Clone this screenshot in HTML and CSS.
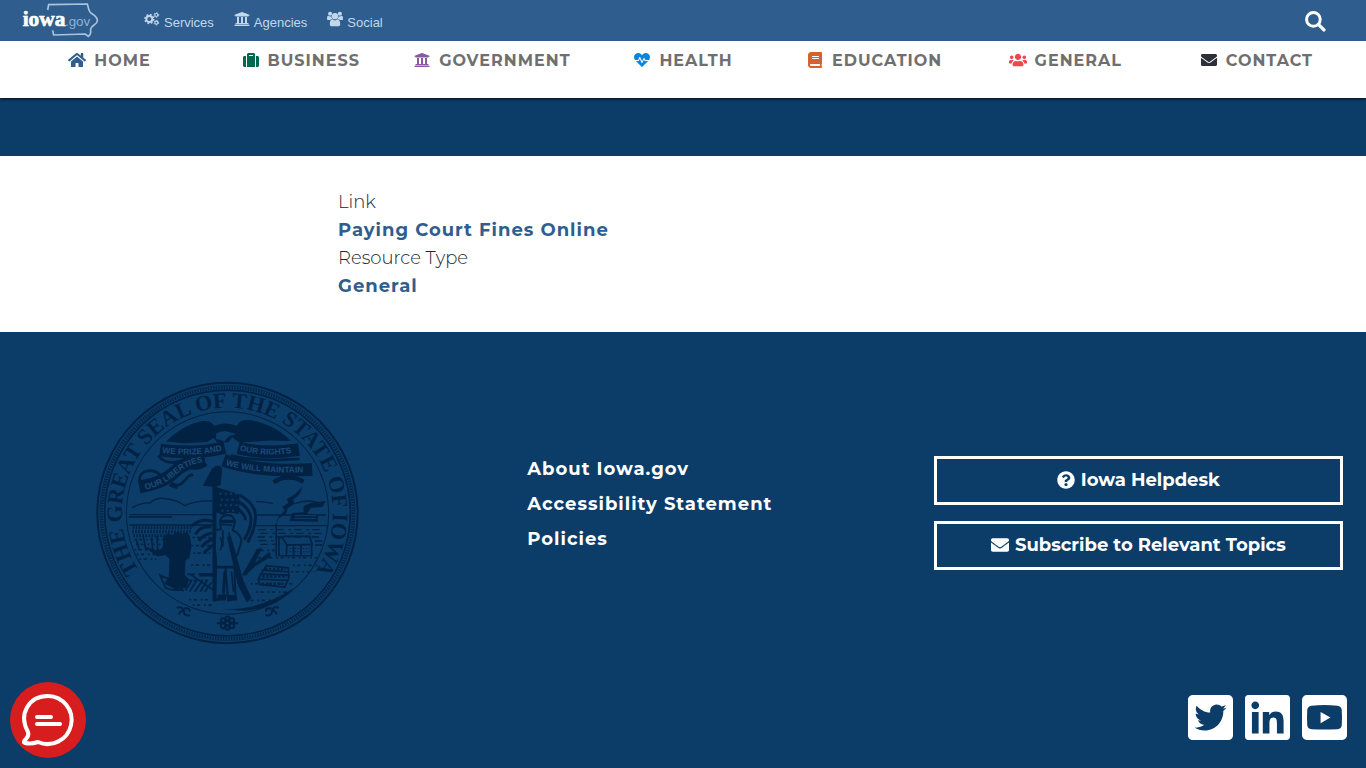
FILE: index.html
```html
<!DOCTYPE html>
<html lang="en">
<head>
  <meta charset="UTF-8">
  <meta name="viewport" content="width=device-width, initial-scale=1.0">
  <title>Paying Court Fines Online | Iowa.gov</title>
  <link rel="stylesheet" href="styles.css">
</head>
<body>
  <!-- icon sprite -->
  <svg class="sprite" aria-hidden="true">
    <symbol id="home" viewBox="0 0 576 512"><path d="M280.37 148.26L96 300.11V464a16 16 0 0 0 16 16l112.06-.29a16 16 0 0 0 15.92-16V368a16 16 0 0 1 16-16h64a16 16 0 0 1 16 16v95.64a16 16 0 0 0 16 16.05L464 480a16 16 0 0 0 16-16V300L295.67 148.26a12.19 12.19 0 0 0-15.3 0zM571.6 251.47L488 182.56V44.05a12 12 0 0 0-12-12h-56a12 12 0 0 0-12 12v72.61L318.47 43a48 48 0 0 0-61 0L4.34 251.47a12 12 0 0 0-1.6 16.9l25.5 31A12 12 0 0 0 45.15 301l235.22-193.74a12.19 12.19 0 0 1 15.3 0L530.9 301a12 12 0 0 0 16.9-1.6l25.5-31a12 12 0 0 0-1.7-16.93z"/></symbol>
    <symbol id="suitcase" viewBox="0 0 512 512"><path d="M128 480h256V80c0-26.5-21.5-48-48-48H176c-26.5 0-48 21.5-48 48v400zm64-384h128v32H192V96zm320 80v256c0 26.5-21.5 48-48 48h-48V128h48c26.5 0 48 21.5 48 48zM96 480H48c-26.5 0-48-21.5-48-48V176c0-26.5 21.5-48 48-48h48v352z"/></symbol>
    <symbol id="university" viewBox="0 0 512 512"><path d="M496 128v16a8 8 0 0 1-8 8h-24v12c0 6.627-5.373 12-12 12H60c-6.627 0-12-5.373-12-12v-12H24a8 8 0 0 1-8-8v-16a8 8 0 0 1 4.941-7.392l232-88a7.996 7.996 0 0 1 6.118 0l232 88A8 8 0 0 1 496 128zm-24 304H40c-13.255 0-24 10.745-24 24v16a8 8 0 0 0 8 8h464a8 8 0 0 0 8-8v-16c0-13.255-10.745-24-24-24zM96 192v192H60c-6.627 0-12 5.373-12 12v20h416v-20c0-6.627-5.373-12-12-12h-36V192h-64v192h-64V192h-64v192h-64V192H96z"/></symbol>
    <symbol id="heartbeat" viewBox="0 0 512 512"><path d="M320.2 243.8l-49.7 99.4c-6 12.1-23.4 11.7-28.9-.6l-56.9-126.3-30 71.7H60.6l182.5 186.5c7.1 7.3 18.6 7.3 25.7 0L451.4 288H342.3l-22.1-44.2zM473.7 73.9l-2.4-2.5c-51.5-52.6-135.8-52.6-187.4 0L256 100l-27.9-28.5c-51.5-52.7-135.9-52.7-187.4 0l-2.4 2.4C-10.4 123.7-12.5 203 31 256h102.4l35.9-86.2c5.4-12.9 23.6-13.2 29.4-.4l58.2 129.3 49-97.9c5.9-11.8 22.7-11.8 28.6 0l27.6 55.2H481c43.5-53 41.4-132.3-7.3-182.1z"/></symbol>
    <symbol id="book" viewBox="0 0 448 512"><path d="M448 360V24c0-13.3-10.7-24-24-24H96C43 0 0 43 0 96v320c0 53 43 96 96 96h328c13.3 0 24-10.7 24-24v-16c0-7.5-3.5-14.3-8.9-18.7-4.2-15.4-4.2-59.3 0-74.7 5.4-4.3 8.9-11.1 8.9-18.6zM128 134c0-3.3 2.7-6 6-6h212c3.3 0 6 2.7 6 6v20c0 3.3-2.7 6-6 6H134c-3.3 0-6-2.7-6-6v-20zm0 64c0-3.3 2.7-6 6-6h212c3.3 0 6 2.7 6 6v20c0 3.3-2.7 6-6 6H134c-3.3 0-6-2.7-6-6v-20zm253.4 250H96c-17.7 0-32-14.3-32-32 0-17.6 14.4-32 32-32h285.4c-1.9 17.1-1.9 46.9 0 64z"/></symbol>
    <symbol id="users" viewBox="0 0 640 512"><path d="M96 224c35.3 0 64-28.7 64-64s-28.7-64-64-64-64 28.7-64 64 28.7 64 64 64zm448 0c35.3 0 64-28.7 64-64s-28.7-64-64-64-64 28.7-64 64 28.7 64 64 64zm32 32h-64c-17.6 0-33.5 7.1-45.1 18.6 40.3 22.1 68.9 62 75.1 109.4h66c17.7 0 32-14.3 32-32v-32c0-35.3-28.7-64-64-64zm-256 0c61.9 0 112-50.1 112-112S381.9 32 320 32 208 82.1 208 144s50.1 112 112 112zm76.8 32h-8.3c-20.8 10-43.9 16-68.5 16s-47.6-6-68.5-16h-8.3C179.6 288 128 339.6 128 403.2V432c0 26.5 21.5 48 48 48h288c26.5 0 48-21.5 48-48v-28.8c0-63.6-51.6-115.2-115.2-115.2zm-223.7-13.4C161.5 263.1 145.6 256 128 256H64c-35.3 0-64 28.7-64 64v32c0 17.7 14.3 32 32 32h65.9c6.3-47.4 34.9-87.3 75.2-109.4z"/></symbol>
    <symbol id="envelope" viewBox="0 0 512 512"><path d="M502.3 190.8c3.9-3.1 9.7-.2 9.7 4.7V400c0 26.5-21.5 48-48 48H48c-26.5 0-48-21.5-48-48V195.6c0-5 5.7-7.8 9.7-4.7 22.4 17.4 52.1 39.5 154.1 113.6 21.1 15.4 56.7 47.8 92.2 47.6 35.7.3 72-32.8 92.3-47.6 102-74.1 131.6-96.3 154-113.7zM256 320c23.2.4 56.6-29.2 73.4-41.4 132.7-96.3 142.8-104.7 173.4-128.7 5.8-4.5 9.2-11.5 9.2-18.9v-19c0-26.5-21.5-48-48-48H48c-26.5 0-48 21.5-48 48v19c0 7.4 3.4 14.3 9.2 18.9 30.6 23.9 40.7 32.4 173.4 128.7 16.8 12.2 50.2 41.8 73.4 41.4z"/></symbol>
    <symbol id="question" viewBox="0 0 512 512"><path d="M504 256c0 136.997-111.043 248-248 248S8 392.997 8 256C8 119.083 119.043 8 256 8s248 111.083 248 248zM262.655 90c-54.497 0-89.255 22.957-116.549 63.758-3.536 5.286-2.353 12.415 2.715 16.258l34.699 26.31c5.205 3.947 12.621 3.008 16.665-2.122 17.864-22.658 30.113-35.797 57.303-35.797 20.429 0 45.698 13.148 45.698 32.958 0 14.976-12.363 22.667-32.534 33.976C247.128 238.528 216 254.941 216 296v4c0 6.627 5.373 12 12 12h56c6.627 0 12-5.373 12-12v-1.333c0-28.462 83.186-29.647 83.186-106.667 0-58.002-60.165-102-116.531-102zM256 338c-25.365 0-46 20.635-46 46 0 25.364 20.635 46 46 46s46-20.636 46-46c0-25.365-20.635-46-46-46z"/></symbol>
    <symbol id="search" viewBox="0 0 20 20"><g fill="none" stroke="currentColor" stroke-linecap="round"><circle cx="8" cy="8" r="6.5" stroke-width="2.8"/><path d="M13 13l5 5" stroke-width="3.2"/></g></symbol>
    <symbol id="cogs" viewBox="0 0 48 44">
      <g fill="none" stroke="currentColor">
        <circle cx="16" cy="22" r="9" stroke-width="6"/>
        <circle cx="16" cy="22" r="13" stroke-width="5" stroke-dasharray="5.2 5"/>
        <circle cx="37" cy="10" r="4.5" stroke-width="3.4"/>
        <circle cx="37" cy="10" r="7" stroke-width="3" stroke-dasharray="3.7 3.6"/>
        <circle cx="37" cy="33" r="4.5" stroke-width="3.4"/>
        <circle cx="37" cy="33" r="7" stroke-width="3" stroke-dasharray="3.7 3.6"/>
      </g>
    </symbol>
    <symbol id="group" viewBox="0 0 46 44">
      <circle cx="9" cy="7" r="6"/><circle cx="37" cy="7" r="6"/><circle cx="23" cy="14" r="9"/>
      <path d="M0 22c0-6 1-9 4-9 4 3 7 2 9 1 0 4 1 6 3 8-3 0-5 1-7 3H4c-3 0-4-1-4-3zM46 22c0-6-1-9-4-9-4 3-7 2-9 1 0 4-1 6-3 8 3 0 5 1 7 3h5c3 0 4-1 4-3zM8 37c0-8 2-13 8-14 4 4 10 4 14 0 6 1 8 6 8 14 0 4-3 6-6 6H14c-3 0-6-2-6-6z"/>
    </symbol>
    <symbol id="twitter" viewBox="0 32 448 448"><path d="M400 32H48C21.5 32 0 53.5 0 80v352c0 26.5 21.5 48 48 48h352c26.5 0 48-21.5 48-48V80c0-26.5-21.5-48-48-48zm-48.9 158.8c.2 2.8.2 5.7.2 8.5 0 86.7-66 186.6-186.6 186.6-37.2 0-71.7-10.8-100.7-29.4 5.3.6 10.4.8 15.8.8 30.7 0 58.9-10.4 81.4-28-28.8-.6-53-19.5-61.3-45.5 10.1 1.5 19.2 1.5 29.6-1.2-30-6.1-52.5-32.5-52.5-64.4v-.8c8.7 4.9 18.9 7.9 29.6 8.3a65.447 65.447 0 0 1-29.2-54.6c0-12.2 3.2-23.4 8.9-33.1 32.3 39.8 80.8 65.8 135.2 68.6-9.3-44.5 24-80.6 64-80.6 18.9 0 35.9 7.9 47.9 20.7 14.8-2.8 29-8.3 41.6-15.8-4.9 15.2-15.2 28-28.8 36.1 13.2-1.4 26-5.1 37.8-10.2-8.9 13.1-20.1 24.7-32.9 34z"/></symbol>
    <symbol id="linkedin" viewBox="0 32 448 448"><path d="M416 32H31.9C14.3 32 0 46.5 0 64.3v383.4C0 465.5 14.3 480 31.9 480H416c17.6 0 32-14.5 32-32.3V64.3c0-17.8-14.4-32.3-32-32.3zM135.4 416H69V202.2h66.5V416zm-33.2-243c-21.3 0-38.5-17.3-38.5-38.5S80.9 96 102.2 96c21.2 0 38.5 17.3 38.5 38.5 0 21.3-17.2 38.5-38.5 38.5zm282.1 243h-66.4V312c0-24.8-.5-56.7-34.5-56.7-34.6 0-39.9 27-39.9 54.9V416h-66.4V202.2h63.7v29.2h.9c8.9-16.8 30.6-34.5 62.9-34.5 67.2 0 79.7 44.3 79.7 101.9V416z"/></symbol>
    <symbol id="youtube" viewBox="0 0 448 448"><path fill-rule="evenodd" d="M48 0h352a48 48 0 0 1 48 48v352a48 48 0 0 1-48 48H48a48 48 0 0 1-48-48V48A48 48 0 0 1 48 0zM94 106c-26 3-40 20-42 44-3 50-3 98 0 148 2 24 16 40 42 42 86 6 174 6 260 0 26-2 40-18 42-42 3-50 3-98 0-148-2-24-16-41-42-44-86-7-174-7-260 0zM185 168l98 56-98 56z"/></symbol>
  </svg>

  <header>
    <div class="topbar">
      <a href="#" class="logo" aria-label="iowa.gov">
        <svg viewBox="66 12 231 105">
          <path class="state" d="M143 33l3-16 116-2c5 15 3 24 14 29 10 6 17 13 16 22-1 12-18 12-20 24-1 11 4 14-7 22l-9-7-95 3-3-14"/>
          <text x="68" y="80" class="logo-iowa">iowa</text>
          <text x="195" y="80" class="logo-gov">.gov</text>
        </svg>
      </a>
      <nav class="quick-links">
        <a href="#"><svg class="cogs"><use href="#cogs"/></svg>Services</a>
        <a href="#"><svg><use href="#university"/></svg>Agencies</a>
        <a href="#"><svg><use href="#group"/></svg>Social</a>
      </nav>
      <button class="search" aria-label="Search"><svg><use href="#search"/></svg></button>
    </div>
    <nav class="main-nav">
      <a href="#"><svg class="blue"><use href="#home"/></svg>HOME</a>
      <a href="#"><svg class="green"><use href="#suitcase"/></svg>BUSINESS</a>
      <a href="#"><svg class="purple"><use href="#university"/></svg>GOVERNMENT</a>
      <a href="#"><svg class="sky"><use href="#heartbeat"/></svg>HEALTH</a>
      <a href="#"><svg class="orange"><use href="#book"/></svg>EDUCATION</a>
      <a href="#"><svg class="red"><use href="#users"/></svg>GENERAL</a>
      <a href="#"><svg class="dark"><use href="#envelope"/></svg>CONTACT</a>
    </nav>
  </header>

  <div class="banner"></div>

  <main>
    <div class="fields">
      <div>Link</div>
      <a href="#">Paying Court Fines Online</a>
      <div>Resource Type</div>
      <a href="#">General</a>
    </div>
  </main>

  <footer>
    <div class="footer-row">
      <div class="seal">
        <svg viewBox="20 30 788 796" role="img" aria-label="The Great Seal of the State of Iowa">
          <defs>
            <path id="ring" d="M165 623A316 316 0 1 1 663 623"/>
            <path id="prize" d="M218 247Q310 262 402 240"/>
            <path id="rights" d="M450 241Q530 262 616 246"/>
            <path id="liberties" d="M168 358Q226 344 258 314T344 274"/>
            <path id="maintain" d="M408 284Q500 312 664 306"/>
          </defs>
          <g class="line">
            <circle cx="414" cy="428" r="390" stroke-width="6"/>
            <circle cx="414" cy="428" r="376" stroke-width="8" stroke-dasharray="4 4"/>
            <circle cx="414" cy="428" r="382" stroke-width="2"/>
            <circle cx="414" cy="428" r="368" stroke-width="5"/>
            <circle cx="414" cy="428" r="303" stroke-width="3"/>
          </g>
          <text class="ring-text"><textPath href="#ring" startOffset="50%">THE GREAT SEAL OF THE STATE OF IOWA</textPath></text>

          <!-- eagle -->
          <path d="M230 214c26-28 68-54 106-61 18-3 32 2 38 14 22-10 46-10 68 0 6-14 20-20 42-17 46 8 92 32 120 62l-62-1-92 6-22-16-12 16-34-2-10-12-18 12-70 4z"/>
          <path class="cut" d="M380 190q20-12 42-4l18 6-22 6-14 16q-12-8-24-8z"/>
          <!-- ribbons -->
          <g class="line">
            <path stroke-width="8" d="M206 256q24 28 62 18 36-16 72-14M152 342q-8-34 22-40 22-4 40 14l-30 20M424 256q80 20 206 10M246 338q20 16 40-8t24-12M556 336q26-18 66-10M240 344l24 8"/>
            <path stroke-width="13" d="M552 336q36-24 66-12l24 10M290 288q40 10 60-8"/>
            <path stroke-width="38" d="M212 239Q310 254 406 232M446 233Q530 254 628 238M150 350Q222 338 254 306T346 266M402 270Q500 306 668 298"/>
          </g>
          <text class="ribbon-text"><textPath href="#prize">WE PRIZE AND</textPath></text>
          <text class="ribbon-text"><textPath href="#rights">OUR RIGHTS</textPath></text>
          <text class="ribbon-text"><textPath href="#liberties">OUR LIBERTIES</textPath></text>
          <text class="ribbon-text"><textPath href="#maintain">WE WILL MAINTAIN</textPath></text>

          <!-- river and hills -->
          <g class="line">
            <path stroke-width="4" d="M128 412q30-16 54-14 20-20 50-12 30 2 54 20 30-16 84-14M500 394q28 0 50 6M616 400q40-16 78 0M120 433h250M500 434h208M118 440h130M120 464h250M500 466h216"/>
            <path stroke-width="4" stroke-dasharray="22 14 8 10" d="M506 478h190M512 489h200M504 500h190M508 511h50M512 522h46M676 512h30M676 524h30"/>
            <path stroke-width="9" stroke-dasharray="5 4" d="M130 472h180M128 484h176M132 496h100"/>
            <path stroke-width="5" stroke-dasharray="5 8 9 12" d="M136 508h100M140 522h90M136 538h80M142 552h60M150 566h50M310 502h60M306 526h60M312 548h50M306 584h60M294 612h70M300 630h70M500 540h60M492 562h200M610 585h80M605 604h70M484 640h130M300 688h60M310 704h60M500 665h90M470 690h100"/>
            <path stroke-width="5" d="M140 505l10 34m12-40l8 42m16-40l5 44m12-48l2 50M288 660l20-32m-8 36l24-38m-8 38l24-36m-8 36l20-32m-6 32l20-28M300 610l70 48M332 610h50"/>
          </g>
          <!-- grain and plow -->
          <path d="M222 500l14-12 12 6 16-10 16 6 14-4 8 14 4 28-6 34-12 8-2 44 14 14-10 24-36 2-30-14 14-20 2-54-12-12-24 4-44-32 48 16 12-12z"/>
          <path class="line" stroke-width="5" d="M212 614c10 6 30 14 44 10l20 8q16 12 0 24-24 8-48-4zM238 640q20 18 46 20"/>
          <!-- liberty cap and flag -->
          <path d="M340 346l26-48q20-22 32-4l-4 50-18 6z"/>
          <path d="M369 345h12v348h-12zM380 350l70 22-2 60q-30-10-48 2l-20-8zM330 608h50v10h-50z"/>
          <g class="line">
            <path stroke-width="9" d="M450 374q48 26 48 64t-24 78M448 394q34 22 36 50t-20 64M446 416q22 18 22 34M370 454q-34-14-64 14M366 470q-34-4-48 22M368 488q-28 4-40 24M370 506q-22 8-34 24M370 524l-28 24"/>
          </g>
          <path class="stars" d="M390 370h54M394 388h50M390 405h54M396 421h46"/>
          <!-- soldier -->
          <path class="figure" d="M392 458q-2-22 22-24 20 0 22 22l-6 24q22 8 26 32l-12 40-10 12 4 120-22 6-8-96-6 92-24 2 2-120-4-34 2-54 16-4z"/>
          <path d="M390 448h48v10h-48zM412 500l12-4 38 136 24 50-14 14-26-50zM386 672h24v18h-30zM416 674h24l4 16h-28zM382 586h60v8h-60zM372 715q130 12 240-62-50 62-150 68z"/>
          <g class="line"><path stroke-width="5" d="M396 462l32 2M400 480v48M418 486l8 44M404 604l-4 64M426 604l6 60M392 500q10 20 0 40"/></g>
          <path d="M458 614l44-78 16-4-22 46 44-34 4 14-48 30-28 28z"/>
          <!-- cabin -->
          <g class="line" stroke-width="5">
            <path d="M568 556v-54l18-4h74l8 24-76 2-16-26M592 524l-2 32h76v-34M612 524v30M634 524v30M560 460v98M568 556h100"/>
            <path stroke-width="3" stroke-dasharray="4 4" d="M600 534h60M600 544h60"/>
            <!-- stacked wood -->
            <path d="M506 626l24-40 66 6 2 30-12 28-76-8zM510 610l86 4M506 626l90 4M516 600l80 4"/>
            <path stroke-width="8" stroke-dasharray="7 5" d="M526 596h62M518 618h74M516 640h66"/>
          </g>
          <!-- smoke and steamboat -->
          <path d="M560 460l6-20 20-20-8-10 18-12-4-12 24-14 24-24-10 24-20 16 6 12-22 14-4 16-22 14zM600 452l8-24 34-2v-18l20-10 46-6-10 18-34 2-12 18 34 4-2 20z"/>
          <path class="cut" d="M616 434h64v4h-64zM614 443h64v3h-64z"/>

          <!-- rosettes at the foot -->
          <g class="line" stroke-width="6">
            <circle cx="414" cy="758" r="7"/>
            <circle cx="401" cy="750" r="7"/><circle cx="427" cy="750" r="7"/><circle cx="401" cy="766" r="7"/><circle cx="427" cy="766" r="7"/>
            <circle cx="414" cy="744" r="6"/><circle cx="414" cy="772" r="6"/>
            <path d="M382 758h12M434 758h12M262 712q18-6 20 10t20 12M268 732q8-16 18-10M284 714q20-2 16 10M568 712q-18-6-20 10t-20 12M562 732q-8-16-18-10M546 714q-20-2-16 10"/>
          </g>
        </svg>
      </div>
      <ul class="footer-links">
        <li><a href="#">About Iowa.gov</a></li>
        <li><a href="#">Accessibility Statement</a></li>
        <li><a href="#">Policies</a></li>
      </ul>
      <div class="footer-buttons">
        <a href="#"><svg><use href="#question"/></svg>Iowa Helpdesk</a>
        <a href="#"><svg><use href="#envelope"/></svg>Subscribe to Relevant Topics</a>
      </div>
    </div>
    <div class="social">
      <a href="#" aria-label="Twitter"><svg><use href="#twitter"/></svg></a>
      <a href="#" aria-label="LinkedIn"><svg><use href="#linkedin"/></svg></a>
      <a href="#" aria-label="YouTube"><svg><use href="#youtube"/></svg></a>
    </div>
  </footer>

  <button class="chat" aria-label="Open chat">
    <svg viewBox="0 0 76 76">
      <path d="M18 50C8 32 19 14 38 14a24 24 0 1 1-10 46c-3 1-9 2-13 1-2-1-1-2 1-4 2-2 3-4 2-7zM27 35h14M27 42h23"/>
    </svg>
  </button>
</body>
</html>
```
FILE: styles.css
```css
* {
  box-sizing: border-box;
}

body {
  margin: 0;
  min-height: 100vh;
  display: flex;
  flex-direction: column;
  background: #fff;
  color: #212529;
  font-family: Montserrat, Inter, sans-serif;
  font-size: 18px;
  line-height: 28px;
}

a {
  color: inherit;
  text-decoration: none;
}

svg {
  fill: currentColor;
}

.sprite {
  position: absolute;
  width: 0;
  height: 0;
}

/* header */
header {
  position: relative;
  box-shadow: 0 1px 3px rgba(0, 0, 0, 0.8);
}

.topbar {
  display: flex;
  align-items: center;
  height: 41px;
  padding: 0 40px 0 22px;
  background: #2f5e8e;
}

.logo svg {
  display: block;
  width: 77px;
  height: 35px;
}

.state {
  fill: none;
  stroke: #a9c4df;
  stroke-width: 5;
}

.logo-iowa {
  font: bold 64px "Liberation Serif", serif;
  fill: #fff;
  stroke: #fff;
  stroke-width: 2;
}

.logo-gov {
  font: 40px "Liberation Sans", sans-serif;
  fill: #8fb2d6;
}

.quick-links {
  display: flex;
  gap: 20px;
  margin-left: 45px;
  color: #c3d7ec;
  font: 13px/20px "Liberation Sans", sans-serif;
}

.quick-links a {
  display: flex;
  gap: 4px;
  padding-top: 5px;
}

.quick-links svg {
  width: 16px;
  height: 16px;
  margin-top: -2px;
}

.search {
  margin-left: auto;
  padding: 2px 0 0;
  border: 0;
  background: none;
  color: #fff;
}

.search svg {
  display: block;
  width: 21px;
  height: 21px;
}

.main-nav {
  display: grid;
  grid-template-columns: repeat(7, 1fr);
  height: 57px;
  padding: 6px 14px 0;
  background: #fff;
  color: #6f6f6f;
  font-size: 16px;
  font-weight: 700;
  letter-spacing: 1px;
}

.main-nav a {
  display: flex;
  justify-content: center;
  gap: 8px;
}

.main-nav svg {
  width: 18px;
  height: 16px;
  margin-top: 5px;
}

.blue { color: #2f5e8e; }
.green { color: #00694e; }
.purple { color: #8a57a5; }
.sky { color: #0b84dc; }
.orange { color: #d4622f; }
.red { color: #f0474f; }
.dark { color: #2d3038; }

.banner {
  height: 58px;
  background: #0c3d69;
}

/* content */
.fields {
  max-width: 690px;
  margin: 0 auto;
  padding: 32px 0;
  font-weight: 300;
}

.fields a {
  display: block;
  color: #2f5e8e;
  font-weight: 700;
  letter-spacing: 1px;
}

/* footer */
footer {
  flex: 1;
  padding-top: 48px;
  background: #0c3d69;
  color: #fff;
  font-weight: 700;
}

.footer-row {
  display: grid;
  grid-template-columns: repeat(3, 1fr);
  align-items: center;
}

.seal {
  color: #022243;
  text-align: center;
}

.seal svg {
  display: block;
  width: 263px;
  height: 266px;
  margin: 0 auto;
}

.line {
  fill: none;
  stroke: currentColor;
}

.cut {
  fill: #0c3d69;
}

.figure {
  fill: #0c3d69;
  stroke: currentColor;
  stroke-width: 6;
}

.stars {
  stroke: #0c3d69;
  stroke-width: 6;
  stroke-dasharray: 6 10;
}

.ring-text {
  font: bold 66px "Liberation Serif", serif;
  text-anchor: middle;
}

.ribbon-text {
  font: bold 25px "Liberation Sans", sans-serif;
  fill: #1c4b79;
}

.footer-links {
  margin: 0;
  padding: 0 0 18px 72px;
  list-style: none;
  letter-spacing: 1px;
}

.footer-links li {
  line-height: 35px;
}

.footer-buttons {
  display: flex;
  flex-direction: column;
  gap: 16px;
  padding: 0 23px;
}

.footer-buttons a {
  display: flex;
  align-items: center;
  justify-content: center;
  gap: 6px;
  height: 49px;
  padding-bottom: 2px;
  border: 3px solid #fff;
}

.footer-buttons svg {
  width: 18px;
  height: 18px;
}

.social {
  display: flex;
  justify-content: flex-end;
  gap: 12px;
  padding: 49px 19px 28px;
}

.social svg {
  display: block;
  width: 45px;
  height: 45px;
}

.chat {
  position: fixed;
  left: 10px;
  bottom: 10px;
  width: 76px;
  height: 76px;
  padding: 0;
  border: 0;
  border-radius: 50%;
  background: #d71d1d;
}

.chat svg {
  display: block;
  fill: none;
  stroke: #fff;
  stroke-width: 4;
  stroke-linecap: round;
  stroke-linejoin: round;
}
```
